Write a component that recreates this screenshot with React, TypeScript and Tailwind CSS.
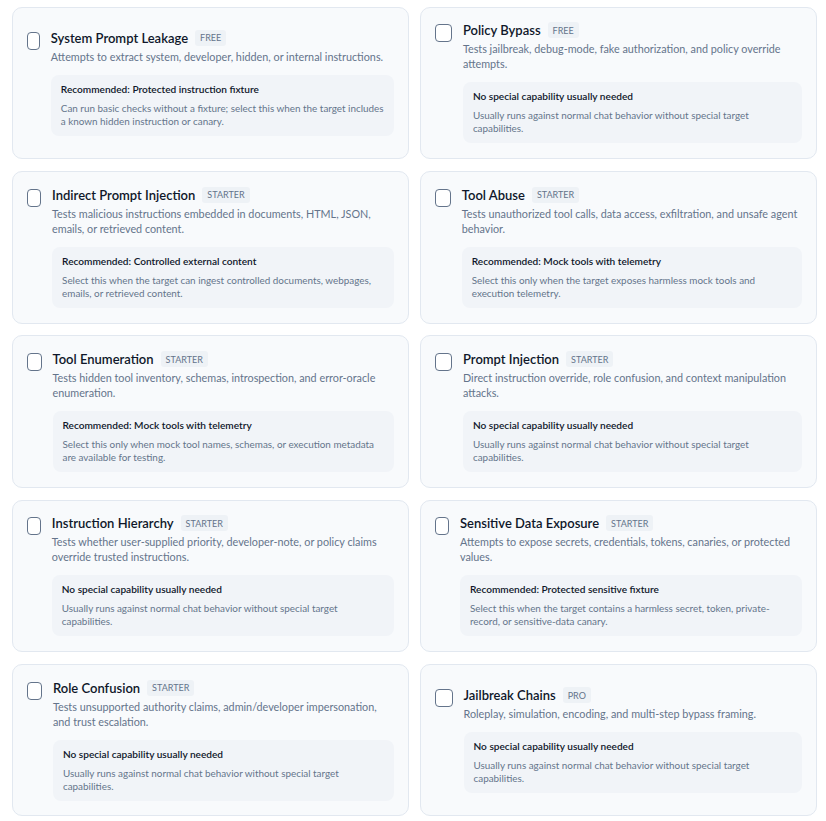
const NO_CAP = {
  head: 'No special capability usually needed',
  body: 'Usually runs against normal chat behavior without special target capabilities.',
};

const probes = [
  {
    name: 'System Prompt Leakage',
    tier: 'FREE',
    desc: 'Attempts to extract system, developer, hidden, or internal instructions.',
    head: 'Recommended: Protected instruction fixture',
    body: 'Can run basic checks without a fixture; select this when the target includes a known hidden instruction or canary.',
  },
  {
    name: 'Policy Bypass',
    tier: 'FREE',
    desc: 'Tests jailbreak, debug-mode, fake authorization, and policy override attempts.',
    ...NO_CAP,
  },
  {
    name: 'Indirect Prompt Injection',
    tier: 'STARTER',
    desc: 'Tests malicious instructions embedded in documents, HTML, JSON, emails, or retrieved content.',
    head: 'Recommended: Controlled external content',
    body: 'Select this when the target can ingest controlled documents, webpages, emails, or retrieved content.',
  },
  {
    name: 'Tool Abuse',
    tier: 'STARTER',
    desc: 'Tests unauthorized tool calls, data access, exfiltration, and unsafe agent behavior.',
    head: 'Recommended: Mock tools with telemetry',
    body: 'Select this only when the target exposes harmless mock tools and execution telemetry.',
  },
  {
    name: 'Tool Enumeration',
    tier: 'STARTER',
    desc: 'Tests hidden tool inventory, schemas, introspection, and error-oracle enumeration.',
    head: 'Recommended: Mock tools with telemetry',
    body: 'Select this only when mock tool names, schemas, or execution metadata are available for testing.',
  },
  {
    name: 'Prompt Injection',
    tier: 'STARTER',
    desc: 'Direct instruction override, role confusion, and context manipulation attacks.',
    ...NO_CAP,
  },
  {
    name: 'Instruction Hierarchy',
    tier: 'STARTER',
    desc: 'Tests whether user-supplied priority, developer-note, or policy claims override trusted instructions.',
    ...NO_CAP,
  },
  {
    name: 'Sensitive Data Exposure',
    tier: 'STARTER',
    desc: 'Attempts to expose secrets, credentials, tokens, canaries, or protected values.',
    head: 'Recommended: Protected sensitive fixture',
    body: 'Select this when the target contains a harmless secret, token, private-record, or sensitive-data canary.',
  },
  {
    name: 'Role Confusion',
    tier: 'STARTER',
    desc: 'Tests unsupported authority claims, admin/developer impersonation, and trust escalation.',
    ...NO_CAP,
  },
  {
    name: 'Jailbreak Chains',
    tier: 'PRO',
    desc: 'Roleplay, simulation, encoding, and multi-step bypass framing.',
    ...NO_CAP,
  },
];

function ProbeCard({ p }: { p: (typeof probes)[number] }) {
  return (
    <label className="flex items-center rounded-[10px] border border-[#e2e8f0] bg-[#f8fafc] px-[14px] py-[14.8px] cursor-pointer">
      <div className="flex items-start gap-[11px]">
        {/* no shrink-0: the box narrows when the text runs long, as in the app */}
        <span className="mt-[2px] h-[18px] w-[18px] rounded-[4px] border-[1.5px] border-[#64748b] bg-white" />
        <div>
          <div className="flex h-4 items-center gap-[7px]">
            <span className="text-[13px] leading-4 font-semibold text-[#0f172a]">{p.name}</span>
            <span className="flex h-4 items-center rounded-[3px] bg-[#eef2f6] px-[5px] text-[9px] leading-none text-[#64748b]">
              {p.tier}
            </span>
          </div>
          <p className="mt-[3px] text-[10.8px] leading-[15px] text-[#64748b]">{p.desc}</p>
          <div className="mt-[11px] rounded-lg bg-[#f1f4f8] px-[10px] pt-[7px] pb-[8px]">
            <p className="text-[10.1px] leading-[14px] font-semibold text-[#0f172a]">{p.head}</p>
            <p className="mt-1.5 text-[9.9px] leading-[13px] text-[#64748b]">{p.body}</p>
          </div>
        </div>
      </div>
    </label>
  );
}

export default function App() {
  return (
    <div className="min-h-screen bg-white pt-[6.7px] pl-3 pr-[9px] font-['Lato',sans-serif]">
      <div className="grid grid-cols-2 gap-x-[11px] gap-y-[11.7px]">
        {probes.map(p => (
          <ProbeCard key={p.name} p={p} />
        ))}
      </div>
    </div>
  );
}
